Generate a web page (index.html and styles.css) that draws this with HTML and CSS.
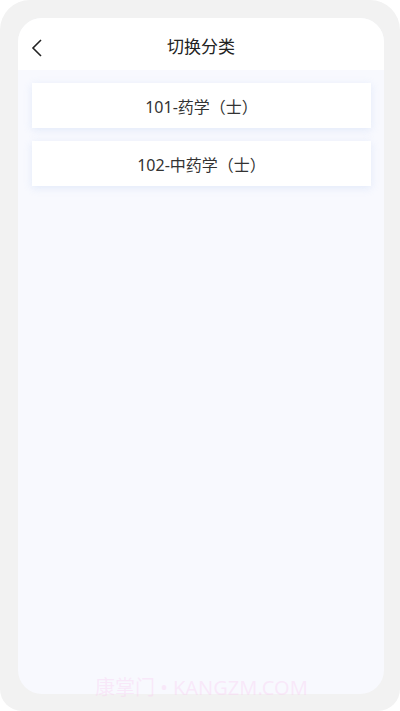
FILE: index.html
```html
<!DOCTYPE html>
<html lang="zh">
<head>
<meta charset="utf-8">
<link rel="stylesheet" href="styles.css">
</head>
<body>
<div class="frame">
  <div class="card">
    <div class="header">
      <svg class="back" width="14" height="20" viewBox="0 0 14 20"><path d="M11 2 L3 10 L11 18" fill="none" stroke="#222" stroke-width="1.6"/></svg>
      <div class="title">切换分类</div>
    </div>
    <div class="list">
      <div class="item">101-药学（士）</div>
      <div class="item">102-中药学（士）</div>
    </div>
  </div>
  <div class="watermark">康掌门 • KANGZM.COM</div>
</div>
</body>
</html>
```
FILE: styles.css
```css
html, body { margin: 0; padding: 0; background: #fff; }
body { width: 400px; height: 711px; overflow: hidden; font-family: "Noto Sans", "Noto Sans CJK SC", sans-serif; }
.frame {
  position: relative;
  width: 400px; height: 711px; box-sizing: border-box;
  background: #f2f2f2;
  border-radius: 30px 30px 22px 22px;
  padding: 18px 16px 17px 18px;
}
.card {
  height: 100%;
  background: #f8f9fe;
  border-radius: 24px;
  overflow: hidden;
}
.header {
  position: relative;
  height: 52px;
  padding-top: 2px;
  box-sizing: border-box;
  background: #fff;
  display: flex; align-items: center; justify-content: center;
}
.back { position: absolute; left: 12px; top: 20px; }
.title { font-size: 17px; color: #222; }
.list { padding: 13px 13px 0 14px; display: flex; flex-direction: column; gap: 13px; }
.item {
  height: 45px; background: #fff;
  display: flex; align-items: center; justify-content: center;
  font-size: 16px; color: #333;
  box-shadow: 0 2px 8px rgba(200, 215, 245, 0.45);
}
.watermark {
  position: absolute; left: 95px; top: 672px;
  font-size: 20px; color: rgba(250, 200, 240, 0.35);
  white-space: nowrap;
}
```
